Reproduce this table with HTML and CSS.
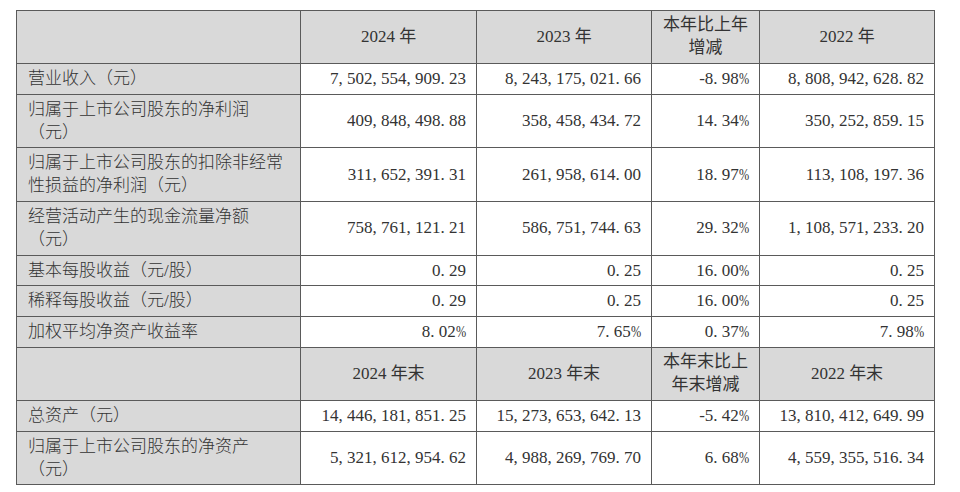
FILE: index.html
```html
<!DOCTYPE html>
<html lang="zh-CN">
<head>
<meta charset="utf-8">
<title>主要会计数据</title>
<link rel="stylesheet" href="styles.css">
</head>
<body>
<table class="fin">
  <colgroup>
    <col class="c-label"><col class="c-wide"><col class="c-num"><col class="c-chg"><col class="c-num">
  </colgroup>
  <tr class="head">
    <th class="label"></th>
    <th>2024 年</th>
    <th>2023 年</th>
    <th>本年比上年增减</th>
    <th>2022 年</th>
  </tr>
  <tr>
    <td class="label">营业收入（元）</td>
    <td>7<span class="p">,</span>502<span class="p">,</span>554<span class="p">,</span>909<span class="p">.</span>23</td>
    <td>8<span class="p">,</span>243<span class="p">,</span>175<span class="p">,</span>021<span class="p">.</span>66</td>
    <td>-8<span class="p">.</span>98<span class="pc">%</span></td>
    <td>8<span class="p">,</span>808<span class="p">,</span>942<span class="p">,</span>628<span class="p">.</span>82</td>
  </tr>
  <tr>
    <td class="label">归属于上市公司股东的净利润（元）</td>
    <td>409<span class="p">,</span>848<span class="p">,</span>498<span class="p">.</span>88</td>
    <td>358<span class="p">,</span>458<span class="p">,</span>434<span class="p">.</span>72</td>
    <td>14<span class="p">.</span>34<span class="pc">%</span></td>
    <td>350<span class="p">,</span>252<span class="p">,</span>859<span class="p">.</span>15</td>
  </tr>
  <tr>
    <td class="label">归属于上市公司股东的扣除非经常性损益的净利润（元）</td>
    <td>311<span class="p">,</span>652<span class="p">,</span>391<span class="p">.</span>31</td>
    <td>261<span class="p">,</span>958<span class="p">,</span>614<span class="p">.</span>00</td>
    <td>18<span class="p">.</span>97<span class="pc">%</span></td>
    <td>113<span class="p">,</span>108<span class="p">,</span>197<span class="p">.</span>36</td>
  </tr>
  <tr>
    <td class="label">经营活动产生的现金流量净额（元）</td>
    <td>758<span class="p">,</span>761<span class="p">,</span>121<span class="p">.</span>21</td>
    <td>586<span class="p">,</span>751<span class="p">,</span>744<span class="p">.</span>63</td>
    <td>29<span class="p">.</span>32<span class="pc">%</span></td>
    <td>1<span class="p">,</span>108<span class="p">,</span>571<span class="p">,</span>233<span class="p">.</span>20</td>
  </tr>
  <tr>
    <td class="label">基本每股收益（元/股）</td>
    <td>0<span class="p">.</span>29</td>
    <td>0<span class="p">.</span>25</td>
    <td>16<span class="p">.</span>00<span class="pc">%</span></td>
    <td>0<span class="p">.</span>25</td>
  </tr>
  <tr>
    <td class="label">稀释每股收益（元/股）</td>
    <td>0<span class="p">.</span>29</td>
    <td>0<span class="p">.</span>25</td>
    <td>16<span class="p">.</span>00<span class="pc">%</span></td>
    <td>0<span class="p">.</span>25</td>
  </tr>
  <tr>
    <td class="label">加权平均净资产收益率</td>
    <td>8<span class="p">.</span>02<span class="pc">%</span></td>
    <td>7<span class="p">.</span>65<span class="pc">%</span></td>
    <td>0<span class="p">.</span>37<span class="pc">%</span></td>
    <td>7<span class="p">.</span>98<span class="pc">%</span></td>
  </tr>
  <tr class="head">
    <th class="label"></th>
    <th>2024 年末</th>
    <th>2023 年末</th>
    <th>本年末比上年末增减</th>
    <th>2022 年末</th>
  </tr>
  <tr>
    <td class="label">总资产（元）</td>
    <td>14<span class="p">,</span>446<span class="p">,</span>181<span class="p">,</span>851<span class="p">.</span>25</td>
    <td>15<span class="p">,</span>273<span class="p">,</span>653<span class="p">,</span>642<span class="p">.</span>13</td>
    <td>-5<span class="p">.</span>42<span class="pc">%</span></td>
    <td>13<span class="p">,</span>810<span class="p">,</span>412<span class="p">,</span>649<span class="p">.</span>99</td>
  </tr>
  <tr>
    <td class="label">归属于上市公司股东的净资产（元）</td>
    <td>5<span class="p">,</span>321<span class="p">,</span>612<span class="p">,</span>954<span class="p">.</span>62</td>
    <td>4<span class="p">,</span>988<span class="p">,</span>269<span class="p">,</span>769<span class="p">.</span>70</td>
    <td>6<span class="p">.</span>68<span class="pc">%</span></td>
    <td>4<span class="p">,</span>559<span class="p">,</span>355<span class="p">,</span>516<span class="p">.</span>34</td>
  </tr>
</table>
</body>
</html>
```
FILE: styles.css
```css
html, body {
  margin: 0;
  background: #ffffff;
}
body {
  padding: 10px 0 0 16px;
  font-family: "Liberation Serif", "Noto Sans CJK SC", serif;
  font-size: 17px;
  color: #333333;
}
.fin {
  border-collapse: collapse;
  table-layout: fixed;
  width: 918px;
}
.c-label { width: 284px; }
.c-wide { width: 176px; }
.c-num { width: 175px; }
.c-chg { width: 108px; }
.fin th, .fin td {
  border: 1px solid #5a5a5a;
  line-height: 22.8px;
  padding: 4px 10px 3px 11px;
  vertical-align: middle;
}
.fin td {
  text-align: right;
}
.fin th {
  font-weight: normal;
  text-align: center;
  background: #d9d9d9;
  height: 46px;
  padding: 3px 10px 3px 10px;
}
.fin .label {
  text-align: left;
  background: #d9d9d9;
  font-weight: 300;
}
.p {
  display: inline-block;
  width: 0.5em;
  text-align: left;
}
.pc {
  display: inline-block;
  width: 0.6em;
  transform: scaleX(0.72);
  transform-origin: left center;
}
```
